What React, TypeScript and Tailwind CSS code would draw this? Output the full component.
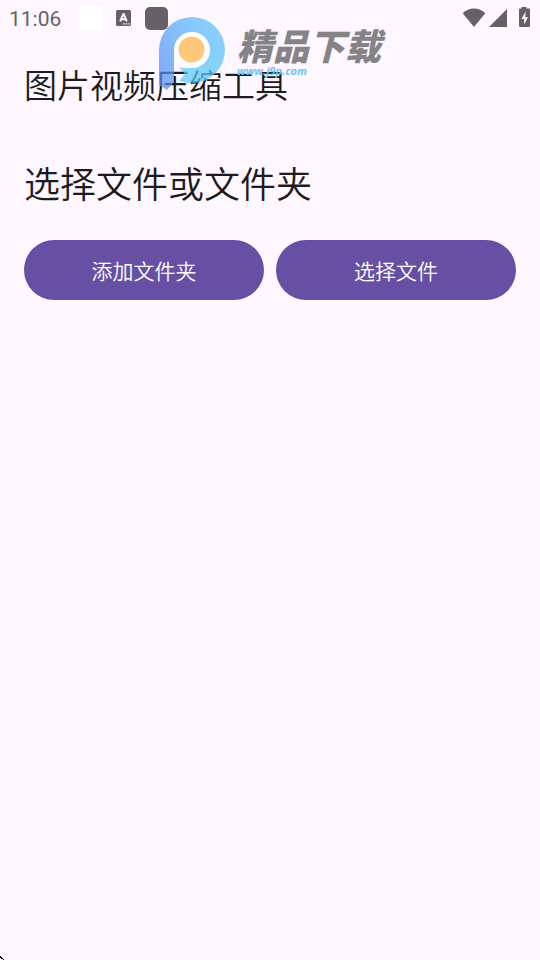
import React from 'react';

function StatusBar() {
  return (
    <div className="flex h-9 items-center justify-between pl-[9px] pr-[10px] text-[#656267]">
      <div className="flex items-center">
        <span className="w-[70px] pt-px font-[Roboto,sans-serif] text-[21px] leading-9">11:06</span>
        <span className="h-6 w-6 bg-white" />
        <svg className="ml-3 h-4 w-4" viewBox="0 0 16 16" aria-hidden="true">
          <rect x="1" y="0" width="15" height="16" rx="1.5" fill="currentColor" />
          <path
            d="M5.200 11.300 8.200 4.200h.6L11.800 11.300M6.500 9.200h4"
            fill="none"
            stroke="#fef7ff"
            strokeWidth="2"
          />
          <path d="M8 13.200h1.600v1.300H8zM10.700 13.200h1.600v1.300h-1.600zM13.400 13.200H15v1.300h-1.600z" fill="#fef7ff" />
        </svg>
        <span className="ml-3.5 h-[23px] w-[23px] rounded-[5px] bg-[#656267]" />
      </div>
      <svg className="h-6 w-[68px]" viewBox="0 0 68 24" fill="currentColor" aria-hidden="true">
        <path d="M12 21 .7 7.300C3.800 4.200 7.700 2.400 12 2.400S20.200 4.200 23.300 7.300Z" />
        <path d="M45 3V21H27Z" />
        <path d="M59.500 1h5v1.500H67q1 0 1 1V19.500q0 1.500-1.500 1.500h-8.500q-1 0-1-1.500V3.500q0-1 1-1h1.500z" />
        <path d="M63.700 5.500 59.400 13h2.800v5.500L66 11.300h-2.700z" fill="#fef7ff" />
      </svg>
    </div>
  );
}

function Watermark() {
  return (
    <div className="pointer-events-none absolute left-[159px] top-[17px] flex items-start">
      <svg className="h-[74px] w-[66px]" viewBox="0 0 66 74" aria-hidden="true">
        <defs>
          <linearGradient id="ring" x1="0" y1="0.7" x2="0.8" y2="0.2">
            <stop offset="0" stopColor="#558ff5" />
            <stop offset="0.5" stopColor="#55a9f8" />
            <stop offset="1" stopColor="#5abffc" />
          </linearGradient>
          <linearGradient id="swirl" x1="0" y1="1" x2="1" y2="0">
            <stop offset="0" stopColor="#55cdf3" />
            <stop offset="1" stopColor="#5abffc" />
          </linearGradient>
        </defs>
        <circle cx="33" cy="32.500" r="18.500" fill="#fff" fillOpacity="0.75" />
        <path
          d="M0 68V33a33 33 0 0 1 66 0H51a18 18 0 0 0-36 0V65L8 73Z"
          fill="url(#ring)"
          fillOpacity="0.72"
        />
        <path
          d="M66 33A33 33 0 0 1 33 66Q26 66 20 64L26 57 20 50Q26 52 33 51A18 18 0 0 0 51 33Z"
          fill="url(#swirl)"
          fillOpacity="0.72"
        />
        <circle cx="32.500" cy="32.500" r="13" fill="#ffb345" fillOpacity="0.72" />
      </svg>
      <div className="ml-3 flex flex-col pt-[7px]">
        <span className="whitespace-nowrap font-['Noto_Sans_CJK_SC',sans-serif] text-[36px] font-black italic leading-10 text-[#858288]">
          精品下载
        </span>
        <span className="-mt-px font-['Open_Sans',sans-serif] text-[11px] font-bold italic leading-4 text-[#6cc4f8]">
          www.j9p.com
        </span>
      </div>
    </div>
  );
}

interface ActionButtonProps {
  label: string;
}

function ActionButton({ label }: ActionButtonProps) {
  return (
    <button
      type="button"
      className="h-[60px] flex-1 rounded-full bg-[#6750a4] text-[21px] font-[350] leading-8 text-white"
    >
      {label}
    </button>
  );
}

export default function App() {
  return (
    <div className="relative flex min-h-screen flex-col bg-[#fef7ff] font-['Noto_Sans_CJK_SC',sans-serif] text-[#1d1b20]">
      <StatusBar />
      <header className="px-6 pt-6">
        <h1 className="text-[33px] font-[350] leading-[48px]">图片视频压缩工具</h1>
      </header>
      <main className="flex-1 px-6 pt-[50px]">
        <h2 className="text-[36px] font-[350] leading-[48px]">选择文件或文件夹</h2>
        <div className="mt-[34px] flex gap-3">
          <ActionButton label="添加文件夹" />
          <ActionButton label="选择文件" />
        </div>
      </main>
      <svg className="h-1 w-1" viewBox="0 0 4 4" aria-hidden="true">
        <path d="M0 0h1v1h1v1h1v1h1v1H3V3H1V2H0z" fill="#000" />
      </svg>
      <Watermark />
    </div>
  );
}
